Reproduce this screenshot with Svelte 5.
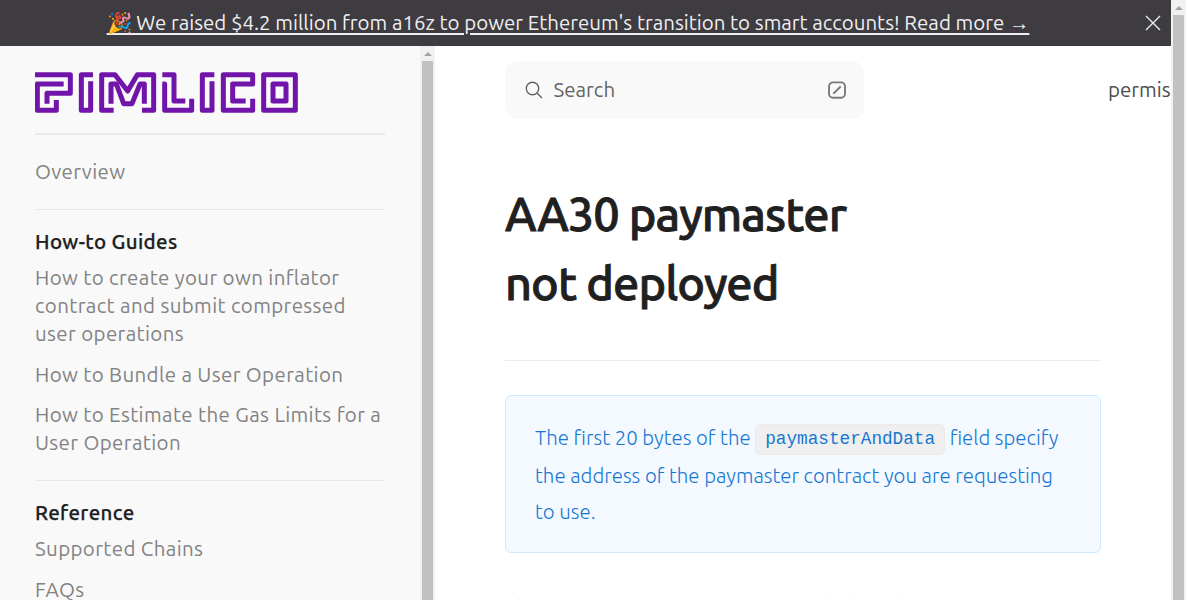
<script>
  const guides = [
    'How to create your own inflator contract and submit compressed user operations',
    'How to Bundle a User Operation',
    'How to Estimate the Gas Limits for a User Operation'
  ];
  const reference = ['Supported Chains', 'FAQs'];
</script>

<div class="page">
  <div class="window">
    <header class="banner">
      <a href="#news">🎉 We raised $4.2 million from a16z to power Ethereum's transition to smart accounts! Read more →</a>
      <button aria-label="Close">
        <svg width="16" height="16" viewBox="0 0 16 16"><path d="M1 1 15 15M15 1 1 15" fill="none" stroke="#eeeef0" stroke-width="1.4" /></svg>
      </button>
    </header>
    <div class="body">
      <aside>
        <svg class="logo" width="264" height="42" viewBox="45 51 792 126" role="img" aria-label="Pimlico" fill="none" stroke="#7115aa" stroke-width="15" stroke-linejoin="round">
          <path d="M45 59H151V115H81V146M131 87H52V166H109V135" />
          <path d="M219 59H184V166H212V79" />
          <path d="M281 166H245V59H285L323 108 352 59H401V166H366" />
          <path d="M273 146V87H289L311 146H336L360 87H373V146" />
          <path d="M427 59H462V138H496M427 87H434V166H515V131" />
          <path d="M583 59H547V166H576V79" />
          <path d="M677 138H638V87H698V59H610V166H698V131" />
          <path d="M731 59H826V166H731ZM759 87H798V138H759Z" />
        </svg>
        <nav>
          <section class="top"><a href="#overview">Overview</a></section>
          <section>
            <h2>How-to Guides</h2>
            {#each guides as label}<a href="#guide">{label}</a>{/each}
          </section>
          <section>
            <h2>Reference</h2>
            {#each reference as label}<a href="#reference">{label}</a>{/each}
          </section>
        </nav>
      </aside>
      <div class="scroll side"><i></i><b></b></div>
      <main>
        <div class="topbar">
          <div class="search">
            <svg width="18" height="18" viewBox="0 0 18 18" fill="none" stroke="#646464" stroke-width="1.4"><circle cx="7.5" cy="7.5" r="6.2" /><path d="m12 12 5 5" /></svg>
            <span>Search</span>
            <svg width="18" height="18" viewBox="0 0 18 18" fill="none" stroke="#7b7b7b" stroke-width="1.9"><rect x="1" y="1.4" width="16" height="15.4" rx="4" /><path d="m5.3 12.7 7.4-7.2" /></svg>
          </div>
          <span class="link">permissionless.js</span>
        </div>
        <article>
          <h1>AA30 paymaster<br />not deployed</h1>
          <div class="callout">The first 20 bytes of the <code>paymasterAndData</code> field specify the address of the paymaster contract you are requesting to use.</div>
          <p>The paymaster contract is not yet deployed</p>
        </article>
      </main>
    </div>
  </div>
  <div class="scroll"><i></i><b></b></div>
</div>

<style>
  :global(body) { margin: 0; overflow: hidden; }
  * { box-sizing: border-box; }
  .page { display: flex; width: 1186px; height: 600px; overflow: hidden; background: #fff; font: 20.5px/28px Ubuntu, "Noto Sans", sans-serif; }
  .window { width: 1171px; height: 600px; overflow: hidden; flex: none; }
  a { color: inherit; text-decoration: none; }
  .banner { height: 46px; background: #3e3b41; color: #eeeef0; display: flex; align-items: center; padding-right: 10px; }
  .banner a { flex: 1; font-size: 20.48px; text-align: center; text-decoration: underline; text-underline-offset: 3px; white-space: nowrap; padding-right: 9px; }
  button { width: 16px; height: 16px; padding: 0; border: 0; background: none; display: flex; }
  .body { display: flex; height: 554px; }
  aside { width: 420px; flex: none; padding: 26px 35px 0; background: #f9f9f9; overflow: hidden; }
  .logo { display: block; }
  nav { margin-top: 19px; color: #838383; letter-spacing: .36px; }
  section { border-top: 1px solid #e8e8e8; padding-top: 18px; display: flex; flex-direction: column; }
  section a { margin-bottom: 12.5px; }
  .top { border-top-width: 2px; padding-top: 23px; height: 76px; }
  section + section { height: 271px; }
  h2 { font-size: 20.5px; line-height: 28px; font-weight: 500; -webkit-text-stroke: .25px; color: #202020; margin: 0 0 8px; }
  .scroll { width: 15px; flex: none; background: #f1f1f1; display: flex; flex-direction: column; align-items: center; }
  .scroll i { border: 4px solid transparent; border-top: 0; border-bottom-color: #a3a3a3; margin: 6px 0 5px; }
  .scroll b { width: 11px; flex: 1; background: #c1c1c1; }
  main { width: 751px; flex: none; overflow: hidden; padding: 15px 0 0 70px; }
  .topbar { height: 58px; display: flex; align-items: center; white-space: nowrap; color: #4d4d4d; }
  .search { width: 359px; height: 58px; flex: none; background: #f9f9f9; border-radius: 12px; padding: 0 18px 0 20px; display: flex; align-items: center; gap: 10.5px; color: #646464; }
  .search span { flex: 1; }
  .link { margin-left: 244px; }
  article { width: 596px; padding-top: 60px; }
  h1 { margin: 0; font-size: 46.9px; line-height: 69px; font-weight: 500; -webkit-text-stroke: .8px; letter-spacing: -.94px; color: #202020; height: 182px; border-bottom: 1px solid #ebebeb; }
  .callout { margin-top: 34px; height: 158px; padding: 23.9px 29px; border: 1px solid #cce9ff; border-radius: 6px; background: #f4f9ff; color: #1677d2; font-size: 20.4px; font-weight: 300; line-height: 36.3px; }
  code { font: 17.7px/36.3px "Liberation Mono", monospace; background: #efefef; border: 1px solid #ebebeb; border-radius: 6px; padding: 4px 9px 5px; position: relative; top: -1px; }
  p { margin: 36.5px 0 0; white-space: nowrap; color: #4d4d4d; line-height: 37px; font-weight: 300; word-spacing: .7px; }
</style>
